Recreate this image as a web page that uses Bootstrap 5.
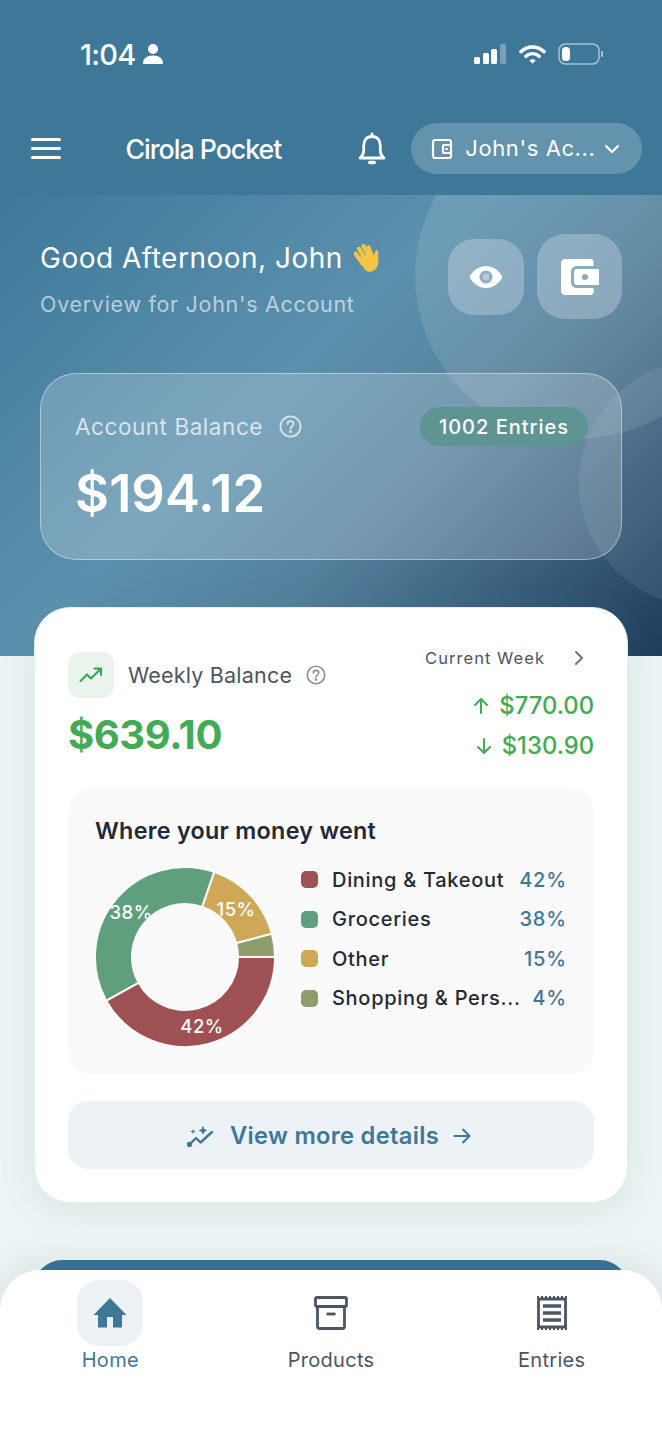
<!DOCTYPE html>
<html lang="en">
<head>
  <meta charset="UTF-8">
  <meta name="viewport" content="width=device-width, initial-scale=1.0">
  <title>Cirola Pocket</title>
  <link rel="stylesheet" href="https://cdn.jsdelivr.net/npm/bootstrap@5.3.0/dist/css/bootstrap.min.css" />
  <style>
    html, body { margin: 0; background: #edf4f6; }
    body { font-family: Inter, "Liberation Sans", sans-serif; color: #1f2937; }
    .app-shell { width: 662px; height: 1440px; overflow: hidden; background: #edf4f6; }

    .top-head { height: 195px; background: #3e7899; color: #fff; }
    .status-row { height: 108px; padding: 0 58px 0 80px; }
    .clock { font-size: 29px; font-weight: 500; letter-spacing: -.8px; line-height: 1; }
    .wifi-gap { margin-left: 13px; }
    .batt-gap { margin-left: 12px; }
    .nav-row { height: 51px; margin-top: 15px; padding: 0 20px 0 31px; }
    .burger span { display: block; width: 30px; height: 3px; background: #fff; border-radius: 2px; margin: 6px 0; }
    .brand-name { font-size: 26.700px; font-weight: 500; letter-spacing: -1px; margin-left: 64.500px; margin-right: 76px; padding-top: 2px; white-space: nowrap; }
    .acct-pill { width: 231px; height: 51px; border-radius: 26px; background: rgba(255,255,255,.2); padding: 0 22px 0 20px; font-size: 22px; letter-spacing: .6px; margin-left: 24px; border: 0; color: #fff; }

    .hero { height: 461px; padding: 39px 40px 0; overflow: hidden; background: linear-gradient(135deg, #3e7899 0%, #5b91ae 42%, #54809c 62%, #1f3c5c 100%); color: #fff; }
    .blob { position: absolute; border-radius: 50%; background: rgba(255,255,255,.11); }
    .blob-a { width: 326px; height: 326px; left: 415px; top: -82px; }
    .blob-b { width: 246px; height: 246px; left: 579px; top: 165px; background: rgba(255,255,255,.08); }
    .hero-top { height: 85px; }
    .greet { font-size: 28px; line-height: 34px; letter-spacing: .5px; margin-top: 7px; white-space: nowrap; }
    .greet-sub { font-size: 21.500px; line-height: 28px; letter-spacing: .7px; color: rgba(255,255,255,.62); margin-top: 15px; }
    .eye-btn { width: 76px; height: 76px; border-radius: 26px; background: rgba(255,255,255,.25); }
    .wallet-btn { width: 85px; height: 85px; border-radius: 28px; background: rgba(255,255,255,.25); margin-left: 13px; }
    .glass { height: 187px; margin-top: 54px; border: 1.500px solid rgba(255,255,255,.42); border-radius: 36px; background: rgba(255,255,255,.2); padding: 33px 34px 0; }
    .glass-label { font-size: 22.500px; letter-spacing: .55px; color: rgba(255,255,255,.72); }
    .entries-pill { width: 168px; height: 39px; border-radius: 20px; background: #5e9491; font-size: 20px; font-weight: 500; letter-spacing: 1px; margin-right: -1px; }
    .glass-amount { font-size: 52.500px; font-weight: 600; line-height: 60px; margin-top: 17px; }

    .week-panel { width: 594px; height: 596px; margin: -49px 0 0 34px; padding: 44px 33px 0; border: 1px solid #e4f0ea; border-radius: 36px; background: #fff; box-shadow: 0 6px 36px rgba(70,140,110,.13); z-index: 2; }
    .week-top { height: 136px; }
    .trend-box { width: 46px; height: 46px; border-radius: 12px; background: #e9f5ec; }
    .week-label { font-size: 21.500px; letter-spacing: .2px; color: #4b5563; margin-left: 14px; }
    .help-gap { margin-left: 14px; }
    .week-amount { font-size: 40px; font-weight: 700; line-height: 50px; color: #43ab55; letter-spacing: -.4px; margin-top: 12px; }
    .cur-week { font-size: 16.500px; letter-spacing: 1.050px; color: #4b5563; line-height: 22px; margin-top: -5px; }
    .flow-row { font-size: 23.800px; font-weight: 500; line-height: 30px; color: #43ab55; margin-top: 10px; }
    .flow-first { margin-top: 22px; }
    .flow-arrow { margin-right: 9px; }

    .spend-box { height: 286px; border-radius: 24px; background: #fafafa; padding: 26px 27px 0; }
    .spend-title { font-size: 23.300px; font-weight: 600; line-height: 34px; letter-spacing: .3px; color: #1f2937; }
    .donut-wrap { width: 180px; height: 180px; margin-top: 19px; flex: none; }
    .legend-list { width: 266px; margin-left: 26px; margin-top: 12px; }
    .legend-row { height: 39.500px; font-size: 20px; font-weight: 500; letter-spacing: .7px; color: #1f2937; white-space: nowrap; }
    .swatch { width: 17px; height: 17px; border-radius: 5px; margin-right: 14px; flex: none; }
    .legend-pct { margin-left: auto; color: #3e7899; letter-spacing: .85px; }

    .more-btn { height: 68px; width: 100%; margin-top: 27px; padding: 2px 4px 0 0; border: 0; border-radius: 20px; background: #edf2f6; color: #3e7899; font-size: 23.700px; font-weight: 600; letter-spacing: .3px; }
    .more-btn:hover { background: #edf2f6; color: #3e7899; }
    .more-icon { margin-right: 15px; }
    .more-arrow { margin-left: 14px; }

    .next-panel { width: 594px; height: 200px; margin: 57px 0 0 34px; border-radius: 28px; background: #3c7495; }

    .tab-bar { position: absolute; left: 0; right: 0; bottom: 0; height: 170px; border-radius: 40px 40px 0 0; background: #fff; box-shadow: 0 -8px 34px rgba(0,0,0,.08); padding-top: 10px; z-index: 5; }
    .tab-icon { width: 66px; height: 66px; border-radius: 22px; }
    .tab-on .tab-icon { background: #ecf1f5; }
    .tab-text { font-size: 20px; line-height: 28px; letter-spacing: .3px; color: #4b5563; }
    .tab-on .tab-text { color: #3e7899; }
  </style>
</head>
<body>
  <div class="app-shell position-relative">

    <header class="top-head">
      <div class="status-row d-flex align-items-center justify-content-between">
        <div class="d-flex align-items-center gap-2">
          <span class="clock">1:04</span>
          <svg width="20" height="22" viewBox="0 0 20 22" fill="#fff"><circle cx="10" cy="6" r="5"/><path d="M1 21c-.6 0-1-.4-1-1 0-4.500 4-7.500 10-7.500s10 3 10 7.500c0 .6-.4 1-1 1z"/></svg>
        </div>
        <div class="d-flex align-items-center">
          <svg width="32" height="20" viewBox="0 0 32 20" fill="#fff"><rect x="0" y="13" width="6" height="7" rx="1.500"/><rect x="9" y="9" width="6" height="11" rx="1.500"/><rect x="17" y="5" width="6" height="15" rx="1.500"/><rect x="26" y="0" width="6" height="20" rx="1.500" opacity=".3"/></svg>
          <svg class="wifi-gap" width="27" height="21" viewBox="0 0 28 21" fill="none" stroke="#fff" stroke-width="3.600" stroke-linecap="round"><path d="M2 7.500c7-6.500 17-6.500 24 0"/><path d="M7 12.500c4.200-3.600 9.800-3.600 14 0"/><path d="M14 20l-3.400-3.600c2-1.400 4.800-1.400 6.800 0z" fill="#fff" stroke="none"/></svg>
          <svg class="batt-gap" width="46" height="22" viewBox="0 0 46 22"><rect x="1" y="1" width="40" height="20" rx="6.500" fill="none" stroke="#fff" stroke-opacity=".55" stroke-width="1.500"/><rect x="4" y="4" width="8" height="14" rx="3.500" fill="#fff"/><rect x="43" y="8" width="2" height="6" rx="1" fill="#fff" fill-opacity=".55"/></svg>
        </div>
      </div>

      <nav class="nav-row d-flex align-items-center">
        <div class="burger"><span></span><span></span><span></span></div>
        <div class="brand-name">Cirola Pocket</div>
        <svg class="flex-shrink-0" width="30" height="34" viewBox="0 0 30 34" fill="none" stroke="#fff" stroke-width="2.800" stroke-linejoin="round" stroke-linecap="round"><path d="M15 2v2.500M15 4.500c-5.500 0-8.300 4-8.300 9v5.500c0 3-1.500 5-3.700 7h24c-2.200-2-3.700-4-3.700-7v-5.500c0-5-2.800-9-8.300-9z"/><path d="M12.800 30.500h4.400" stroke-width="3.600"/></svg>
        <button class="acct-pill d-flex align-items-center flex-shrink-0" type="button">
          <svg width="22" height="22" viewBox="0 0 22 22" fill="none" stroke="#fff" stroke-width="2.200" stroke-linejoin="round"><rect x="2" y="2" width="18" height="18" rx="2"/><path d="M20 7h-7a1 1 0 0 0-1 1v6a1 1 0 0 0 1 1h7"/><circle cx="15.500" cy="11" r="1.300" fill="#fff" stroke="none"/></svg>
          <span class="ms-2 ps-1">John's Ac...</span>
          <svg class="ms-auto" width="16" height="10" viewBox="0 0 16 10" fill="none" stroke="#fff" stroke-width="2.200" stroke-linecap="round" stroke-linejoin="round"><path d="M2 2l6 6 6-6"/></svg>
        </button>
      </nav>
    </header>

    <section class="hero position-relative">
      <div class="blob blob-a"></div>
      <div class="blob blob-b"></div>

      <div class="hero-top d-flex justify-content-between align-items-start position-relative">
        <div>
          <div class="greet d-flex align-items-center">Good Afternoon, John
            <svg class="ms-2" width="32" height="32" viewBox="0 0 32 32"><g transform="rotate(-14 17 18)"><g fill="none" stroke="#f6c445" stroke-width="4.200" stroke-linecap="round"><path d="M11 20L6.500 9"/><path d="M15 18L11 5"/><path d="M19 17L16 3.500"/><path d="M22 18L20.500 6"/></g><path d="M9 16c-1-2.500 2-4 11-2.500 3-.5 2.500-.5 3 2l3.500-4.500c1-1.200 3-.2 2.300 1.600L27 21c-1.500 6-5.500 9.500-10.500 9C11 29.500 10 22 9 16z" fill="#f6c445"/></g><path d="M2 20c.5 3 2 5.500 4 7M1 15c0-1 .5-2 1-3" fill="none" stroke="#5e7f92" stroke-width="1.500" stroke-linecap="round"/><path d="M24 2c2 .5 3.500 2 4 4" fill="none" stroke="#5e7f92" stroke-width="1.500" stroke-linecap="round"/></svg>
          </div>
          <div class="greet-sub">Overview for John's Account</div>
        </div>
        <div class="d-flex align-items-center">
          <div class="eye-btn d-flex align-items-center justify-content-center">
            <svg width="34" height="24" viewBox="0 0 34 24" fill="#fff"><path fill-rule="evenodd" d="M17 1C9.500 1 3.500 6 .5 12c3 6 9 11 16.500 11s13.500-5 16.500-11C30.500 6 24.500 1 17 1zm0 4.500a6.500 6.500 0 1 1 0 13 6.500 6.500 0 0 1 0-13z"/><circle cx="17" cy="12" r="3.500" fill="#fff" fill-opacity=".35"/></svg>
          </div>
          <div class="wallet-btn d-flex align-items-center justify-content-center">
            <svg width="38" height="36" viewBox="0 0 38 36" fill="#fff"><path d="M4 0h26c1.500 0 2.500 1 2.500 2.500V7H16c-3.500 0-6 2.500-6 6v10c0 3.500 2.500 6 6 6h16.500v4c0 1.700-1.300 3-3 3H4c-2.200 0-4-1.800-4-4V4c0-2.200 1.800-4 4-4z"/><path fill-rule="evenodd" d="M16 10h22v16H16c-1.700 0-3-1.300-3-3V13c0-1.700 1.300-3 3-3zm8 5a3 3 0 1 0 0 6 3 3 0 0 0 0-6z"/></svg>
          </div>
        </div>
      </div>

      <div class="glass position-relative">
        <div class="d-flex align-items-center justify-content-between">
          <div class="glass-label d-flex align-items-center">Account Balance
            <svg class="ms-3" width="23" height="23" viewBox="0 0 24 24" fill="none" stroke="#fff" stroke-opacity=".72" stroke-width="1.800" stroke-linecap="round"><circle cx="12" cy="12" r="10.500"/><path d="M8.800 9.500c0-1.800 1.400-3 3.200-3s3.200 1.200 3.200 2.800c0 2.400-3.200 2.500-3.200 5"/><circle cx="12" cy="17.500" r=".6" fill="#fff"/></svg>
          </div>
          <div class="entries-pill d-flex align-items-center justify-content-center">1002 Entries</div>
        </div>
        <div class="glass-amount">$194.12</div>
      </div>
    </section>

    <section class="week-panel position-relative">
      <div class="week-top d-flex justify-content-between">
        <div>
          <div class="d-flex align-items-center">
            <div class="trend-box d-flex align-items-center justify-content-center">
              <svg width="24" height="16" viewBox="0 0 24 16" fill="none" stroke="#2fa552" stroke-width="2" stroke-linecap="round" stroke-linejoin="round"><path d="M1.500 14L8 7.500l4 4L21.500 2"/><path d="M15.500 1.500h6.500V8"/></svg>
            </div>
            <span class="week-label">Weekly Balance</span>
            <svg class="help-gap" width="20" height="20" viewBox="0 0 24 24" fill="none" stroke="#8a919c" stroke-width="2" stroke-linecap="round"><circle cx="12" cy="12" r="10.500"/><path d="M8.800 9.500c0-1.800 1.400-3 3.200-3s3.200 1.200 3.200 2.800c0 2.400-3.200 2.500-3.200 5"/><circle cx="12" cy="17.500" r=".6" fill="#8a919c"/></svg>
          </div>
          <div class="week-amount">$639.10</div>
        </div>
        <div class="text-end">
          <div class="cur-week d-flex align-items-center justify-content-end">Current Week
            <svg style="margin-left:28px;margin-right:9px" width="12" height="16" viewBox="0 0 12 16" fill="none" stroke="#6b7280" stroke-width="2" stroke-linecap="round" stroke-linejoin="round"><path d="M3 2l6 6-6 6"/></svg>
          </div>
          <div class="flow-row flow-first d-flex align-items-center justify-content-end">
            <svg class="flow-arrow" width="18" height="18" viewBox="0 0 18 18" fill="none" stroke="#43ab55" stroke-width="2" stroke-linecap="round" stroke-linejoin="round"><path d="M9 16V2M3 8l6-6 6 6"/></svg>
            $770.00
          </div>
          <div class="flow-row d-flex align-items-center justify-content-end">
            <svg class="flow-arrow" width="18" height="18" viewBox="0 0 18 18" fill="none" stroke="#43ab55" stroke-width="2" stroke-linecap="round" stroke-linejoin="round"><path d="M9 2v14M3 10l6 6 6-6"/></svg>
            $130.90
          </div>
        </div>
      </div>

      <div class="spend-box">
        <div class="spend-title">Where your money went</div>
        <div class="d-flex">
          <div class="donut-wrap"><svg id="donut" width="180" height="180" viewBox="0 0 180 180"></svg></div>
          <div class="legend-list" id="legend"></div>
        </div>
      </div>

      <button class="btn more-btn d-flex align-items-center justify-content-center" type="button">
        <svg class="more-icon" width="28" height="22" viewBox="0 0 28 22" fill="none" stroke="#3e7899" stroke-width="2.400" stroke-linecap="round" stroke-linejoin="round"><path d="M2 20l7-7 4.500 4.500L25 7"/><circle cx="2.500" cy="19.500" r="1.500" fill="#3e7899"/><path d="M16 2l1 2.500L19.500 5.500 17 6.500 16 9l-1-2.500L12.500 5.500 15 4.500z" fill="#3e7899" stroke-width="1"/><path d="M6 5v3M4.500 6.500h3" stroke-width="1.200"/></svg>
        View more details
        <svg class="more-arrow" width="18" height="16" viewBox="0 0 18 16" fill="none" stroke="#3e7899" stroke-width="2" stroke-linecap="round" stroke-linejoin="round"><path d="M1.500 8h15M10 1.500L16.500 8 10 14.500"/></svg>
      </button>
    </section>

    <div class="next-panel"></div>

    <nav class="tab-bar d-flex">
      <div class="tab-on d-flex flex-column align-items-center flex-fill w-100">
        <div class="tab-icon d-flex align-items-center justify-content-center">
          <svg width="34" height="30" viewBox="0 0 34 30" fill="#3e7899"><path d="M17 0L33.500 17H29v12.500H20V19h-6v10.500H5V17H.5z"/></svg>
        </div>
        <div class="tab-text">Home</div>
      </div>
      <div class="d-flex flex-column align-items-center flex-fill w-100">
        <div class="tab-icon d-flex align-items-center justify-content-center">
          <svg width="34" height="34" viewBox="0 0 34 34" fill="none" stroke="#4b5563" stroke-width="2.800" stroke-linejoin="round"><rect x="1.500" y="1.500" width="31" height="9" rx="1.500"/><path d="M3.500 10.500v20a2 2 0 0 0 2 2h23a2 2 0 0 0 2-2v-20"/><path d="M12.500 18h9"/></svg>
        </div>
        <div class="tab-text">Products</div>
      </div>
      <div class="d-flex flex-column align-items-center flex-fill w-100">
        <div class="tab-icon d-flex align-items-center justify-content-center">
          <svg width="30" height="34" viewBox="0 0 30 34" fill="none" stroke="#4b5563"><path d="M1.500 3h27v28h-27z" stroke-width="2.800"/><path d="M0 1h30M0 33h30" stroke-width="2" stroke-dasharray="2 2"/><path d="M6 10h18M6 17h18M6 24h18" stroke-width="3.400"/></svg>
        </div>
        <div class="tab-text">Entries</div>
      </div>
    </nav>
  </div>

  <script src="https://cdn.jsdelivr.net/npm/bootstrap@5.3.0/dist/js/bootstrap.bundle.min.js"></script>
  <script>
    const kategori = [
      { nama: 'Dining &amp; Takeout', pct: 42, warna: '#9e5052', busur: 151 },
      { nama: 'Groceries', pct: 38, warna: '#5f9f7e', busur: 138 },
      { nama: 'Other', pct: 15, warna: '#cfa857', busur: 56 },
      { nama: 'Shopping &amp; Pers...', pct: 4, warna: '#8f9c6c', busur: 15 }
    ];

    // gambar donat mulai dari arah jam 3, searah jarum jam
    function titik(r, sudut) {
      const a = sudut * Math.PI / 180;
      return (90 + r * Math.cos(a)).toFixed(2) + ' ' + (90 + r * Math.sin(a)).toFixed(2);
    }
    let mulai = 0, isi = '';
    kategori.forEach(k => {
      const akhir = mulai + k.busur, besar = k.busur > 180 ? 1 : 0;
      isi += `<path d="M${titik(90, mulai)} A90 90 0 ${besar} 1 ${titik(90, akhir)} L${titik(53, akhir)} A53 53 0 ${besar} 0 ${titik(53, mulai)}Z" fill="${k.warna}" stroke="#fafafa" stroke-width="2"/>`;
      mulai = akhir;
    });
    isi += '<g fill="#fff" font-size="18.500" font-weight="500" text-anchor="middle" letter-spacing=".5">' +
      '<text x="36" y="51.500">38%</text><text x="141" y="48.500">15%</text><text x="107" y="165.500">42%</text></g>';
    document.getElementById('donut').innerHTML = isi;

    document.getElementById('legend').innerHTML = kategori.map(k => `
      <div class="legend-row d-flex align-items-center">
        <span class="swatch" style="background:${k.warna}"></span>
        <span>${k.nama}</span>
        <span class="legend-pct">${k.pct}%</span>
      </div>`).join('');
  </script>
</body>
</html>
